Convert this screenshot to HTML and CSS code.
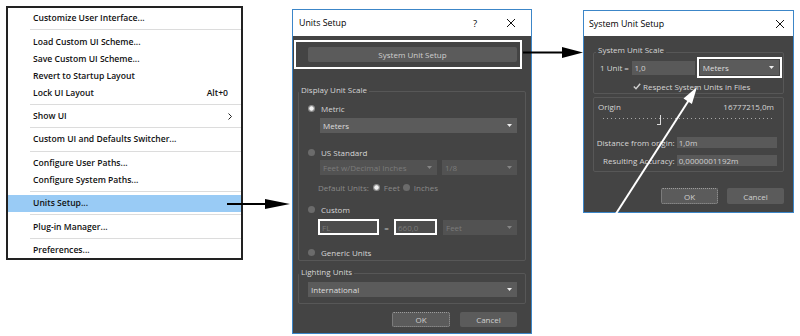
FILE: index.html
```html
<!DOCTYPE html>
<html lang="en">
<head>
    <meta charset="UTF-8">
    <title>Units Setup</title>
    <link rel="stylesheet" href="styles.css">
</head>
<body>
    <div class="figure">
        <div class="menu">
            <div class="item">Customize User Interface...</div>
            <div class="sep"></div>
            <div class="item">Load Custom UI Scheme...</div>
            <div class="item">Save Custom UI Scheme...</div>
            <div class="item">Revert to Startup Layout</div>
            <div class="item"><span>Lock UI Layout</span><span>Alt+0</span></div>
            <div class="sep"></div>
            <div class="item sub"><span>Show UI</span><svg class="chev" width="4" height="7" viewBox="0 0 4 7"><polyline points="0.5,0.5 3.5,3.5 0.5,6.5" fill="none" stroke="#222" stroke-width="1"/></svg></div>
            <div class="sep"></div>
            <div class="item">Custom UI and Defaults Switcher...</div>
            <div class="sep"></div>
            <div class="item">Configure User Paths...</div>
            <div class="item">Configure System Paths...</div>
            <div class="sep"></div>
            <div class="item active">Units Setup...</div>
            <div class="sep"></div>
            <div class="item">Plug-in Manager...</div>
            <div class="sep"></div>
            <div class="item">Preferences...</div>
        </div>

        <div class="dialog units">
            <div class="titlebar">
                <span class="title">Units Setup</span>
                <span class="help">?</span>
                <svg class="close" viewBox="0 0 8 8"><path d="M0 0L8 8M8 0L0 8" stroke="#111" stroke-width="1"/></svg>
            </div>
            <div class="body">
                <div class="mark top"><div class="btn">System Unit Setup</div></div>

                <div class="group display">
                    <div class="group-title">Display Unit Scale</div>
                    <div class="radio-row r-metric"><span class="radio on"></span>Metric</div>
                    <div class="combo meters"><span>Meters</span><svg class="arrow" viewBox="0 0 5 3"><polygon points="0,0 5,0 2.5,3"/></svg></div>
                    <div class="radio-row r-us"><span class="radio"></span>US Standard</div>
                    <div class="combo-row">
                        <div class="combo off w-feet"><span>Feet w/Decimal Inches</span><svg class="arrow" viewBox="0 0 5 3"><polygon points="0,0 5,0 2.5,3"/></svg></div>
                        <div class="combo off w-frac"><span>1/8</span><svg class="arrow" viewBox="0 0 5 3"><polygon points="0,0 5,0 2.5,3"/></svg></div>
                    </div>
                    <div class="defaults">
                        <span>Default Units:</span>
                        <span class="radio small on"></span><span>Feet</span>
                        <span class="radio small"></span><span>Inches</span>
                    </div>
                    <div class="radio-row r-custom"><span class="radio"></span>Custom</div>
                    <div class="custom-fields">
                        <div class="field marked w-fl">FL</div>
                        <span class="eq">=</span>
                        <div class="field marked w-num">660,0</div>
                        <div class="combo off w-unit"><span>Feet</span><svg class="arrow" viewBox="0 0 5 3"><polygon points="0,0 5,0 2.5,3"/></svg></div>
                    </div>
                    <div class="radio-row r-generic"><span class="radio"></span>Generic Units</div>
                </div>

                <div class="group lighting">
                    <div class="group-title">Lighting Units</div>
                    <div class="combo intl"><span>International</span><svg class="arrow" viewBox="0 0 5 3"><polygon points="0,0 5,0 2.5,3"/></svg></div>
                </div>

                <div class="buttons">
                    <div class="btn ok focus">OK</div>
                    <div class="btn cancel">Cancel</div>
                </div>
            </div>
        </div>

        <div class="dialog sys">
            <div class="titlebar">
                <span class="title">System Unit Setup</span>
                <svg class="close" viewBox="0 0 8 8"><path d="M0 0L8 8M8 0L0 8" stroke="#111" stroke-width="1"/></svg>
            </div>
            <div class="body">
                <div class="group scale">
                    <div class="group-title">System Unit Scale</div>
                    <div class="unit-row">
                        <span>1 Unit =</span>
                        <div class="field on w-val">1,0</div>
                        <div class="mark side"><div class="combo"><span>Meters</span><svg class="arrow" viewBox="0 0 5 3"><polygon points="0,0 5,0 2.5,3"/></svg></div></div>
                    </div>
                    <div class="check-row">
                        <svg class="check" viewBox="0 0 8 7"><polyline points="0.8,3.6 3,5.8 7.2,0.8" fill="none" stroke="#d0d0d0" stroke-width="1.4"/></svg>
                        <span>Respect System Units in Files</span>
                    </div>
                </div>

                <div class="group origin">
                    <div class="origin-row"><span>Origin</span><span>16777215,0m</span></div>
                    <div class="slider"><span class="thumb"></span></div>
                    <div class="info">
                        <span class="lbl">Distance from origin:</span>
                        <div class="field on">1,0m</div>
                        <span class="lbl">Resulting Accuracy:</span>
                        <div class="field on">0,0000001192m</div>
                    </div>
                </div>

                <div class="buttons">
                    <div class="btn ok focus">OK</div>
                    <div class="btn cancel">Cancel</div>
                </div>
            </div>
        </div>
    </div>

    <svg class="arrows" width="800" height="336" viewBox="0 0 800 336">
        <line x1="227" y1="204" x2="267" y2="204" stroke="#000" stroke-width="2"/>
        <polygon points="265,199 290,204 265,209" fill="#000"/>
        <line x1="523" y1="52.5" x2="564" y2="52.5" stroke="#000" stroke-width="2"/>
        <polygon points="562,47 583,52.5 562,58" fill="#000"/>
        <line x1="610" y1="223" x2="689" y2="100" stroke="#fff" stroke-width="2"/>
        <polygon points="697,87 691.9,103.9 683.5,98.5" fill="#fff"/>
    </svg>
</body>
</html>
```

FILE: styles.css
```css
* {
    margin: 0;
    padding: 0;
    box-sizing: border-box;
}
body {
    position: relative;
    width: 800px;
    height: 336px;
    overflow: hidden;
    background: #fff;
    font-family: "Open Sans", "Noto Sans", sans-serif;
}
.figure {
    display: flex;
    align-items: flex-start;
    padding-left: 6px;
}

/* left popup menu */
.menu {
    width: 237px;
    margin-top: 6px;
    padding-top: 1.8px;
    border: 2px solid #222;
    background: #fff;
    color: #111;
    font-size: 8.6px;
    font-weight: 600;
}
.menu .item {
    display: flex;
    align-items: center;
    justify-content: space-between;
    height: 17px;
    padding: 0 13px 0 25px;
    white-space: nowrap;
}
.menu .item.sub {
    padding-right: 9px;
}
.menu .item.active {
    background: #99cbf5;
}
.menu .sep {
    height: 1px;
    margin: 2.7px 0 2.7px 22px;
    background: #dcdcdc;
}

/* dialogs */
.dialog {
    border: 1px solid #3c86c8;
    background: #444;
    color: #d6d6d6;
    font-size: 8px;
}
.units {
    width: 240px;
    margin: 9px 0 0 49px;
}
.sys {
    width: 211px;
    margin: 10px 0 0 51px;
}
.titlebar {
    display: flex;
    align-items: center;
    background: #fff;
    color: #000;
    font-size: 8.8px;
}
.units .titlebar {
    height: 26px;
    padding: 0 16px 0 6px;
}
.sys .titlebar {
    height: 25px;
    padding: 0 9px 0 5px;
}
.title {
    flex: 1;
}
.help {
    margin-right: 30px;
    font-size: 9.5px;
}
.close {
    width: 8px;
    height: 8px;
}
.units .body {
    display: flex;
    flex-direction: column;
    padding: 0 5px 6px;
}
.sys .body {
    display: flex;
    flex-direction: column;
    padding: 0 9px 7.5px;
}

/* white callout frames */
.mark {
    border: 2px solid #fff;
}
.mark.top {
    margin: 4px 4px 0 -4px;
    padding: 5px 3px 5px 12px;
}
.mark.side {
    width: 85px;
    margin-left: 1.3px;
    padding: 1px;
}

.btn {
    display: flex;
    align-items: center;
    justify-content: center;
    height: 15px;
    border-radius: 2px;
    background: #5b5b5b;
    color: #cfcfcf;
}
.btn.focus {
    border: 1px dotted #9c9c9c;
}

.group {
    display: flex;
    flex-direction: column;
    border: 1px solid #575757;
    border-radius: 2px;
}
.group-title {
    align-self: flex-start;
    margin-top: -8px;
    padding: 0 2px;
    line-height: 12px;
    background: #444;
}

.radio-row {
    display: flex;
    align-items: center;
    height: 14px;
    margin-left: 9px;
}
.radio {
    width: 7px;
    height: 7px;
    margin-right: 6px;
    border-radius: 50%;
    background: #6b6b6b;
}
.radio.on {
    background: radial-gradient(circle, #f2f2f2 0 1.8px, #8c8c8c 2.6px);
}
.radio.small {
    margin: 0 4px 0 3px;
}

.combo {
    display: flex;
    align-items: center;
    justify-content: space-between;
    height: 15px;
    padding: 0 5px 0 3px;
    background: #5b5b5b;
    color: #dedede;
}
.combo .arrow {
    width: 5px;
    height: 3px;
    fill: #eee;
}
.combo.off {
    background: #525252;
    color: #7b7b7b;
}
.combo.off .arrow {
    fill: #858585;
}

.r-metric { margin-top: 5px; }
.meters { margin: 3px 8px 0 21px; }
.r-us { margin-top: 12px; }
.combo-row {
    display: flex;
    gap: 5px;
    margin: 1px 8px 0 21px;
}
.w-feet { width: 117px; }
.w-frac { flex: 1; }
.defaults {
    display: flex;
    align-items: center;
    height: 12px;
    margin: 6px 0 0 19px;
    color: #8a8a8a;
}
.defaults .radio.on {
    margin-left: 4px;
}
.r-custom { margin-top: 9px; }
.custom-fields {
    display: flex;
    align-items: center;
    height: 16px;
    margin: 3px 8px 0 19px;
}
.field {
    display: flex;
    align-items: center;
    padding-left: 2px;
    background: #4d4d4d;
    color: #7a7a7a;
}
.field.marked {
    height: 16px;
    border: 2px solid #fff;
}
.field.on {
    background: #595959;
    color: #cfcfcf;
}
.w-fl { width: 61px; }
.eq {
    width: 15px;
    text-align: center;
    color: #bdbdbd;
}
.w-num { width: 43px; }
.w-unit {
    flex: 1;
    margin-left: 6px;
}
.r-generic { margin-top: 10px; }
.display {
    margin-top: 22px;
    padding-bottom: 1px;
}
.lighting {
    margin-top: 12px;
    padding-bottom: 6px;
}
.intl { margin: 4px 8px 0 9px; }

.buttons {
    display: flex;
    justify-content: flex-end;
}
.units .buttons {
    gap: 10px;
    margin-top: 8px;
    padding-right: 9px;
}
.units .ok { width: 58px; }
.units .cancel { width: 57px; }
.sys .buttons {
    gap: 9px;
    margin-top: 16px;
}
.sys .btn {
    width: 57px;
    height: 16px;
}

/* system unit setup */
.scale {
    margin-top: 16px;
    padding-bottom: 1px;
}
.scale .group-title {
    margin: -9px 0 0 2px;
}
.unit-row {
    display: flex;
    align-items: center;
    height: 21px;
    margin-top: 1px;
    padding-left: 6px;
}
.w-val {
    width: 63px;
    height: 14px;
    margin-left: 3.5px;
}
.check-row {
    display: flex;
    align-items: center;
    height: 12px;
    margin-top: 2px;
    padding-left: 39px;
}
.check {
    width: 8px;
    height: 7px;
    margin-right: 2px;
}
.origin {
    margin-top: 3px;
    padding-bottom: 5px;
}
.origin-row {
    display: flex;
    justify-content: space-between;
    height: 12px;
    margin-top: 3px;
    padding: 0 9px 0 4px;
    line-height: 12px;
}
.slider {
    position: relative;
    height: 12px;
    margin: 1px 10px 0 9px;
    background: repeating-linear-gradient(90deg, #a8a8a8 0 1px, transparent 1px 4px) 0 4px / 100% 1px no-repeat;
}
.thumb {
    position: absolute;
    left: 54px;
    top: 1px;
    width: 4px;
    height: 10px;
    border-right: 1px solid #dcdcdc;
    border-bottom: 1px solid #dcdcdc;
}
.info {
    display: grid;
    grid-template-columns: 80.7px 100px;
    column-gap: 2px;
    row-gap: 7px;
    margin-top: 11px;
}
.info .lbl {
    text-align: right;
    line-height: 11px;
    white-space: nowrap;
}
.info .field {
    height: 11px;
}

.arrows {
    position: absolute;
    left: 0;
    top: 0;
    pointer-events: none;
}
```
